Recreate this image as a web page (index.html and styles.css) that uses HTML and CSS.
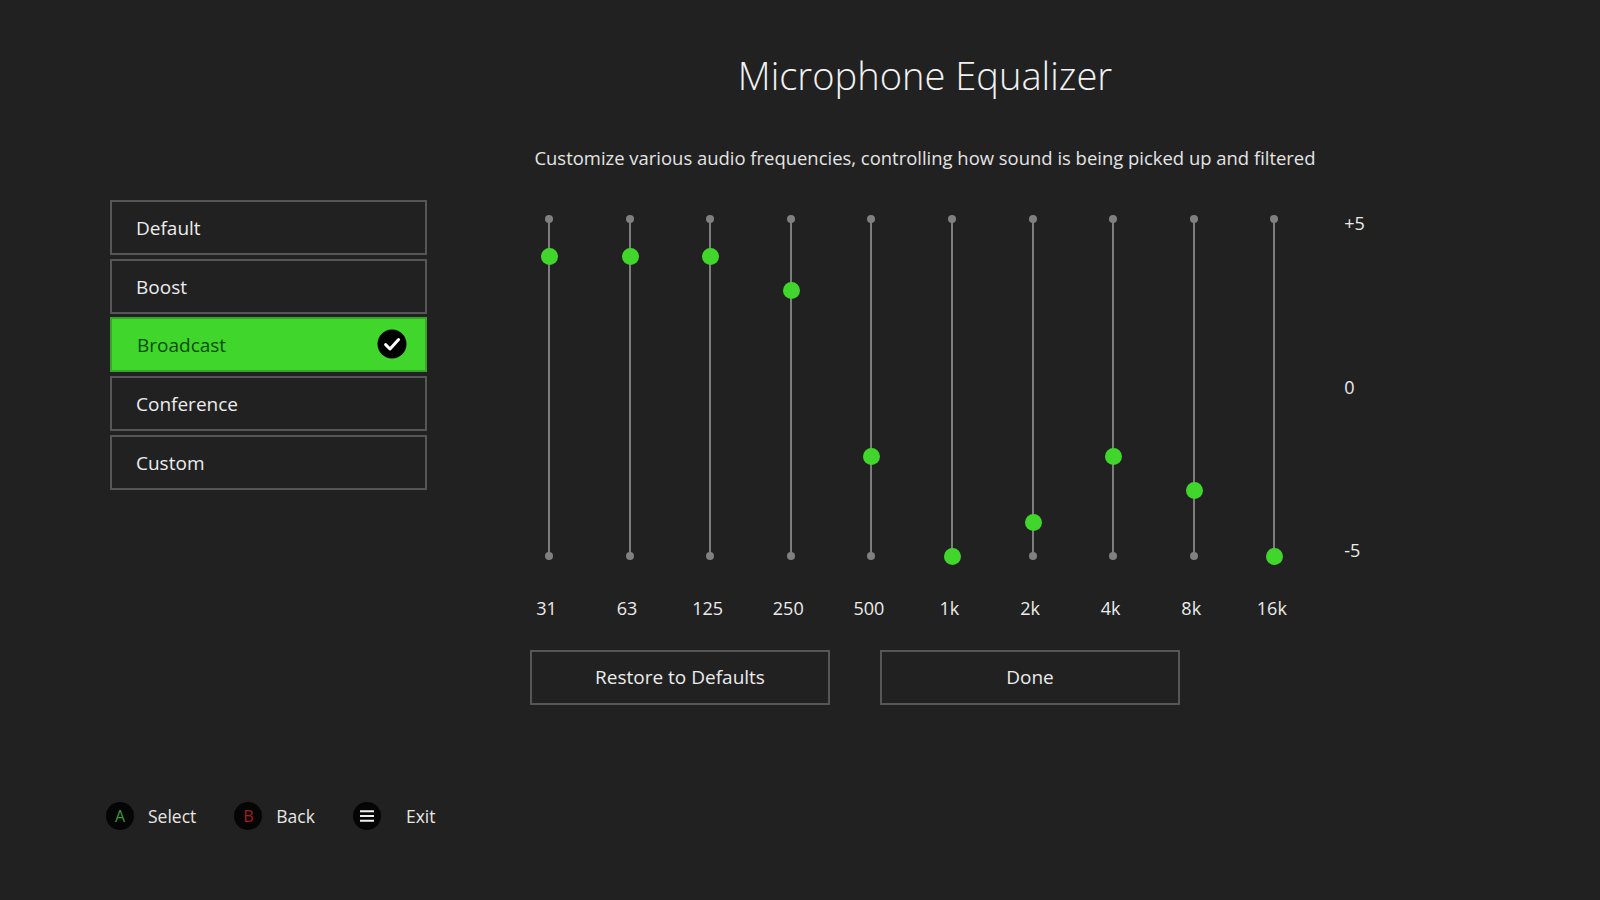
FILE: index.html
```html
<!DOCTYPE html>
<html lang="en">
<head>
<meta charset="utf-8">
<title>Microphone Equalizer</title>
<link rel="stylesheet" href="styles.css">
</head>
<body>
<div class="page">
  <div class="main">
    <aside class="sidebar">
      <div class="preset">Default</div>
      <div class="preset">Boost</div>
      <div class="preset preset-active">
        <span>Broadcast</span>
        <svg class="check" viewBox="0 0 30 30" aria-hidden="true">
          <circle cx="15" cy="15" r="14.5" fill="#000"/>
          <path d="M8.6 15.6l4.4 4.4 8.6-9.4" fill="none" stroke="#fff" stroke-width="3" stroke-linecap="round" stroke-linejoin="round"/>
        </svg>
      </div>
      <div class="preset">Conference</div>
      <div class="preset">Custom</div>
    </aside>
    <section class="content">
      <header class="heading">
        <h1 class="title">Microphone Equalizer</h1>
        <p class="desc">Customize various audio frequencies, controlling how sound is being picked up and filtered</p>
      </header>
      <div class="eq">
        <div class="bands">
          <div class="band"><div class="track"><span class="knob" style="top:11.3%"></span></div><div class="band-label">31</div></div>
          <div class="band"><div class="track"><span class="knob" style="top:11.3%"></span></div><div class="band-label">63</div></div>
          <div class="band"><div class="track"><span class="knob" style="top:11.3%"></span></div><div class="band-label">125</div></div>
          <div class="band"><div class="track"><span class="knob" style="top:21.3%"></span></div><div class="band-label">250</div></div>
          <div class="band"><div class="track"><span class="knob" style="top:70.6%"></span></div><div class="band-label">500</div></div>
          <div class="band"><div class="track"><span class="knob" style="top:100.3%"></span></div><div class="band-label">1k</div></div>
          <div class="band"><div class="track"><span class="knob" style="top:90.3%"></span></div><div class="band-label">2k</div></div>
          <div class="band"><div class="track"><span class="knob" style="top:70.6%"></span></div><div class="band-label">4k</div></div>
          <div class="band"><div class="track"><span class="knob" style="top:80.7%"></span></div><div class="band-label">8k</div></div>
          <div class="band"><div class="track"><span class="knob" style="top:100.3%"></span></div><div class="band-label">16k</div></div>
        </div>
        <div class="scale">
          <span>+5</span>
          <span>0</span>
          <span>-5</span>
        </div>
      </div>
      <div class="actions">
        <div class="btn">Restore to Defaults</div>
        <div class="btn">Done</div>
      </div>
    </section>
  </div>
  <footer class="footer">
    <div class="hint"><span class="pad pad-a">A</span><span>Select</span></div>
    <div class="hint"><span class="pad pad-b">B</span><span>Back</span></div>
    <div class="hint hint-wide">
      <span class="pad">
        <svg class="menu-icon" viewBox="0 0 14 12" aria-hidden="true">
          <path d="M0 1.2h14M0 6h14M0 10.8h14" stroke="#eee" stroke-width="2" fill="none"/>
        </svg>
      </span>
      <span>Exit</span>
    </div>
  </footer>
</div>
</body>
</html>
```

FILE: styles.css
```css
* { box-sizing: border-box; }

html, body {
  margin: 0;
  padding: 0;
  background: #212121;
}

body {
  color: #ececec;
  font-family: "Open Sans", "Noto Sans", "Liberation Sans", sans-serif;
}

.page {
  width: 1600px;
  height: 900px;
  overflow: hidden;
  display: grid;
  grid-template-rows: 1fr auto;
}

.main {
  display: flex;
  padding-left: 110px;
  min-height: 0;
}

/* preset list */
.sidebar {
  width: 317px;
  padding-top: 200px;
  display: flex;
  flex-direction: column;
  gap: 3.7px;
  flex: none;
}

.preset {
  height: 55px;
  border: 2px solid #565656;
  padding: 1px 0 0 24px;
  display: flex;
  align-items: center;
  justify-content: space-between;
  font-size: 19px;
  color: #ececec;
}

.preset-active {
  background: #41d62c;
  border-color: #3aa42c;
  color: #084a0a;
  padding-left: 25px;
  padding-right: 18px;
}

.check {
  width: 30px;
  height: 30px;
  display: block;
  margin-top: -2px;
}

/* right column */
.content {
  margin-left: 81.7px;
  width: 880px;
  flex: none;
  padding-top: 47px;
}

.heading {
  width: 832.6px;
  text-align: center;
}

.title {
  margin: 0;
  font-size: 38.1px;
  line-height: 56px;
  font-weight: 300;
  color: #f2f2f2;
}

.desc {
  margin: 0;
  margin-top: 42px;
  font-size: 18.45px;
  line-height: 26px;
  color: #e4e4e4;
}

.eq {
  display: flex;
  margin-top: 36.5px;
}

.bands {
  display: grid;
  grid-template-columns: repeat(10, 80.6px);
}

.band {
  display: flex;
  flex-direction: column;
  align-items: center;
  padding-top: 11px;
}

.track {
  position: relative;
  width: 2px;
  height: 337px;
  background: #7d7d7d;
}

.track::before,
.track::after {
  content: "";
  position: absolute;
  left: -3px;
  width: 8px;
  height: 8px;
  border-radius: 50%;
  background: #808080;
}

.track::before { top: -4px; }
.track::after { bottom: -4px; }

.knob {
  position: absolute;
  left: 1.5px;
  width: 17px;
  height: 17px;
  margin: -8.5px 0 0 -8.5px;
  border-radius: 50%;
  background: #41d62c;
  z-index: 1;
}

.band-label {
  margin-top: 40px;
  padding-right: 5px;
  font-size: 18px;
  line-height: 24px;
  color: #ececec;
}

.scale {
  margin-left: 29.7px;
  width: 30px;
  height: 351px;
  margin-top: 3.5px;
  display: flex;
  flex-direction: column;
  justify-content: space-between;
  font-size: 18px;
  line-height: 24px;
  color: #ececec;
  white-space: nowrap;
}

.actions {
  display: flex;
  gap: 50px;
  margin-top: 30px;
  margin-left: 21.3px;
}

.btn {
  width: 300px;
  height: 55px;
  border: 2px solid #565656;
  display: flex;
  align-items: center;
  justify-content: center;
  font-size: 19px;
  color: #ececec;
}

/* footer hints */
.footer {
  display: flex;
  gap: 38px;
  padding-left: 106px;
  padding-bottom: 70px;
  font-size: 17.5px;
  color: #e6e6e6;
}

.hint {
  display: flex;
  align-items: center;
  gap: 14px;
}

.hint-wide { gap: 25px; }

.pad {
  width: 28px;
  height: 28px;
  border-radius: 50%;
  background: #050505;
  display: flex;
  align-items: center;
  justify-content: center;
  font-size: 16px;
  line-height: 1;
}

.pad-a { color: #3f9a3a; }
.pad-b { color: #a61c1e; }

.menu-icon {
  width: 14px;
  height: 12px;
  display: block;
}
```
